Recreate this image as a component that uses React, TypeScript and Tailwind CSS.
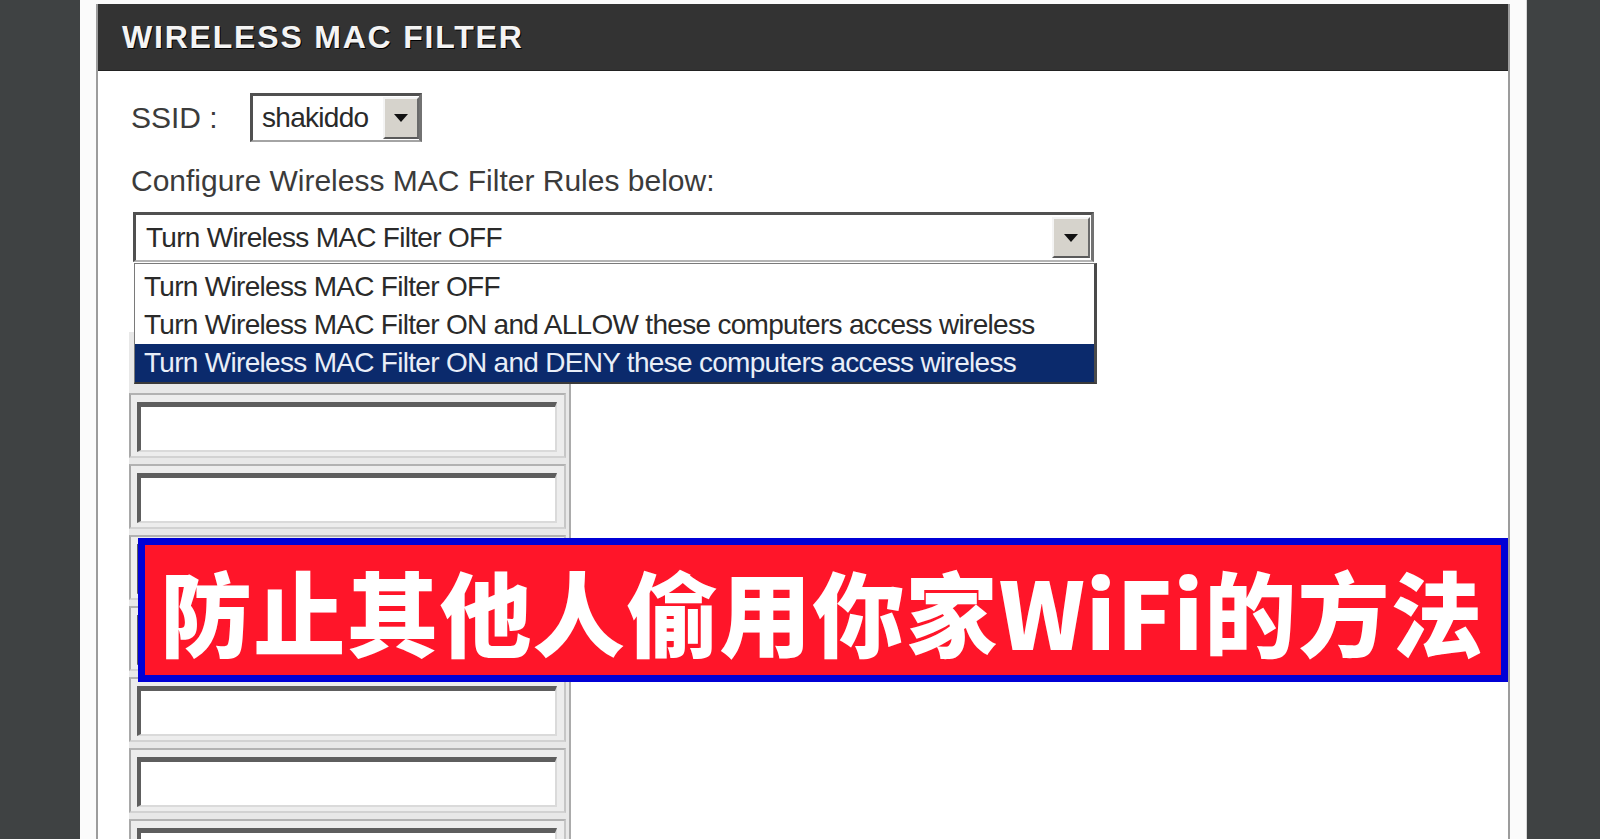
import { FC } from 'react';

const ui = "font-['Liberation_Sans',Arial,sans-serif]";

const ArrowButton: FC<{ className?: string }> = ({ className = '' }) => (
  <div
    className={`flex items-center justify-center bg-[#d6d3cc] border-2 border-t-[#f4f4f4] border-l-[#f4f4f4] border-r-[#6a6a6a] border-b-[#5a5a5a] ${className}`}
  >
    <svg width="14" height="8" viewBox="0 0 14 8">
      <path d="M0 0h14L7 8z" fill="#111" />
    </svg>
  </div>
);

const options = [
  'Turn Wireless MAC Filter OFF',
  'Turn Wireless MAC Filter ON and ALLOW these computers access wireless',
  'Turn Wireless MAC Filter ON and DENY these computers access wireless',
];

const App: FC = () => {
  return (
    <div className={`w-[1600px] h-[839px] overflow-hidden bg-[#3f4243] flex ${ui}`}>
      <div className="ml-[80px] w-[1447px] h-full bg-[#fbfbfb] px-[16px] pt-[4px] border-r border-[#d6d6d6]">
        <div className="relative h-[900px] bg-white border-x-2 border-[#9c9c9c]">
          {/* Header */}
          <div className="h-[67px] bg-[#333333] border-b border-[#222] flex items-center pl-[24px]">
            <span className="text-[32px] font-bold tracking-[1.8px] text-[#f4f4f4] [text-shadow:1px_1px_0_#000]">
              WIRELESS MAC FILTER
            </span>
          </div>

          {/* SSID */}
          <div className="mt-[22px] ml-[33px] flex items-center">
            <span className="w-[119px] text-[30px] text-[#3b3b3b]">SSID :</span>
            <div className="w-[172px] h-[49px] flex items-center bg-white border-t-[3px] border-l-[3px] border-r-[3px] border-b-2 border-t-[#505050] border-l-[#505050] border-r-[#727272] border-b-[#a4a4a4]">
              <span className="flex-1 pl-[9px] text-[28px] tracking-[-0.7px] text-[#2a2a2a]">shakiddo</span>
              <ArrowButton className="w-[36px] h-[42px]" />
            </div>
          </div>

          {/* Rules label */}
          <p className="mt-[21px] ml-[33px] text-[30px] leading-[36px] text-[#3b3b3b]">
            Configure Wireless MAC Filter Rules below:
          </p>

          {/* Rules select with open list */}
          <div className="relative mt-[13px] ml-[35px] w-[961px]">
            <div className="h-[50px] flex items-center bg-white border-t-[3px] border-l-[3px] border-r-[3px] border-b-2 border-t-[#505050] border-l-[#505050] border-r-[#727272] border-b-[#b4b4b4]">
              <span className="flex-1 pl-[10px] text-[28px] tracking-[-0.7px] text-[#2a2a2a]">{options[0]}</span>
              <ArrowButton className="w-[38px] h-[41px] mr-[1px]" />
            </div>

            <div className="absolute left-[1px] top-[51px] z-10 w-[963px] bg-white border border-[#7a7a7a] border-r-[3px] border-r-[#4a4a4a] border-b-2 border-b-[#3a3a3a] pt-[4px]">
              <div className="h-[38px] flex items-center pl-[9px] text-[28px] tracking-[-0.7px] text-[#2a2a2a]">{options[0]}</div>
              <div className="h-[38px] flex items-center pl-[9px] text-[28px] tracking-[-0.7px] text-[#2a2a2a]">{options[1]}</div>
              <div className="h-[38px] flex items-center pl-[9px] text-[28px] tracking-[-0.7px] text-[#e9eef8] bg-[#0b2a6c]">{options[2]}</div>
            </div>
          </div>

          {/* MAC address inputs */}
          <div className="mt-[70px] ml-[31px] w-[442px] bg-[#e8e8e8] border-r-2 border-[#ababab] pt-[61px] flex flex-col gap-[6px]">
            {[0, 1, 2, 3, 4, 5, 6].map((i) => (
              <div
                key={i}
                className="w-[437px] h-[65px] shrink-0 bg-[#ededed] border-2 border-t-[#b2b2b2] border-l-[#a8a8a8] border-r-[#c6c6c6] border-b-[#d2d2d2]"
              >
                <div className="ml-[6px] mt-[7px] w-[420px] h-[50px] bg-white border-t-[5px] border-l-[4px] border-r-2 border-b-2 border-t-[#5e5e5e] border-l-[#5e5e5e] border-r-[#dadada] border-b-[#dadada]" />
              </div>
            ))}
          </div>

          {/* Title banner */}
          <div className="absolute left-[40px] top-[534px] z-20 w-[1370px] h-[144px] bg-[#ff1529] border-[7px] border-[#0000d6] flex items-center pl-[15px]">
            <span className="font-['Noto_Sans_CJK_SC',sans-serif] font-black text-[92px] leading-none tracking-[1.2px] text-white whitespace-nowrap">
              防止其他人偷用你家WiFi的方法
            </span>
          </div>
        </div>
      </div>
    </div>
  );
};

export default App;
